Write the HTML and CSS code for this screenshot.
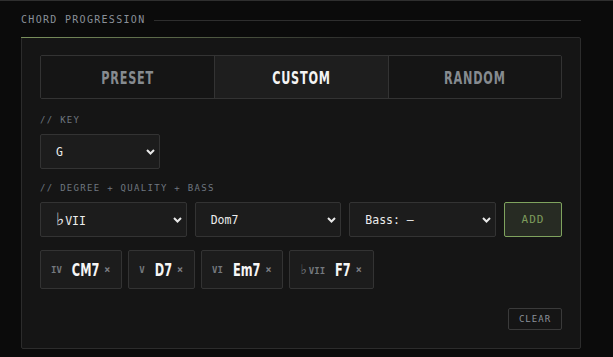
FILE: index.html
```html
<!DOCTYPE html>
<html lang="en">
<head>
<meta charset="utf-8">
<title>Chord Progression</title>
<link rel="stylesheet" href="styles.css">
</head>
<body>
<div class="wrap">
  <div class="heading">
    <span class="heading-text">CHORD PROGRESSION</span>
    <span class="heading-line"></span>
  </div>
  <section class="panel">
    <div class="tabs">
      <div class="tab"><span class="tab-text">PRESET</span></div>
      <div class="tab active"><span class="tab-text">CUSTOM</span></div>
      <div class="tab"><span class="tab-text">RANDOM</span></div>
    </div>

    <div class="label first">// KEY</div>
    <div class="select key">
      <span class="select-value">G</span>
      <svg class="chev" width="9" height="6" viewBox="0 0 9 6"><path d="M1 1 L4.5 4.5 L8 1" fill="none" stroke="#e8e8e8" stroke-width="2"/></svg>
    </div>

    <div class="label second">// DEGREE + QUALITY + BASS</div>
    <div class="builder">
      <div class="select">
        <span class="select-value"><span class="flat">♭</span>VII</span>
        <svg class="chev" width="9" height="6" viewBox="0 0 9 6"><path d="M1 1 L4.5 4.5 L8 1" fill="none" stroke="#e8e8e8" stroke-width="2"/></svg>
      </div>
      <div class="select">
        <span class="select-value">Dom7</span>
        <svg class="chev" width="9" height="6" viewBox="0 0 9 6"><path d="M1 1 L4.5 4.5 L8 1" fill="none" stroke="#e8e8e8" stroke-width="2"/></svg>
      </div>
      <div class="select">
        <span class="select-value">Bass: —</span>
        <svg class="chev" width="9" height="6" viewBox="0 0 9 6"><path d="M1 1 L4.5 4.5 L8 1" fill="none" stroke="#e8e8e8" stroke-width="2"/></svg>
      </div>
      <button class="add">ADD</button>
    </div>

    <div class="chips">
      <div class="chip"><span class="deg">IV</span><span class="name">CM7</span><span class="x">×</span></div>
      <div class="chip"><span class="deg">V</span><span class="name">D7</span><span class="x">×</span></div>
      <div class="chip"><span class="deg">VI</span><span class="name">Em7</span><span class="x">×</span></div>
      <div class="chip"><span class="deg"><span class="flat">♭</span>VII</span><span class="name">F7</span><span class="x">×</span></div>
    </div>

    <div class="actions">
      <button class="clear">CLEAR</button>
    </div>
  </section>
</div>
</body>
</html>
```

FILE: styles.css
```css
* { box-sizing: border-box; }

html, body {
  margin: 0;
  padding: 0;
}

body {
  background: #0b0b0b;
  border-top: 1px solid #2f2f2f;
  height: 357px;
  overflow: hidden;
  font-family: "DejaVu Sans Mono", "Liberation Mono", monospace;
}

.wrap {
  margin: 0 32px 0 21px;
}

.heading {
  display: flex;
  align-items: center;
  gap: 9px;
  margin-top: 13px;
  height: 12px;
  margin-bottom: 11px;
}

.heading-text {
  font-size: 10px;
  line-height: 12px;
  letter-spacing: 1.3px;
  color: #8a9099;
  white-space: nowrap;
}

.heading-line {
  flex: 1;
  height: 1px;
  background: #2e2e2e;
}

.panel {
  position: relative;
  background: #151515;
  border: 1px solid #2c2c2c;
  border-radius: 2px;
  padding: 17px 18px 18px;
}

.panel::before {
  content: "";
  position: absolute;
  top: -1px;
  left: -1px;
  right: -1px;
  height: 1px;
  background: linear-gradient(90deg, rgba(150, 180, 110, 0.75), rgba(150, 180, 110, 0) 60%);
}

.tabs {
  display: grid;
  grid-template-columns: 1fr 1fr 1fr;
  height: 44px;
  border: 1px solid #333;
  border-radius: 2px;
  overflow: hidden;
}

.tab {
  display: flex;
  align-items: center;
  justify-content: center;
  background: #151515;
  color: #868b90;
}

.tab-text {
  display: inline-block;
  font-family: "DejaVu Sans Condensed", "DejaVu Sans", sans-serif;
  font-stretch: condensed;
  font-weight: 700;
  font-size: 12.5px;
  letter-spacing: 0.8px;
  transform: scaleY(1.42);
}

.tab + .tab {
  border-left: 1px solid #333;
}

.tab.active {
  background: #1e1e1e;
  color: #f4f4f4;
}

.label {
  font-size: 9px;
  line-height: 14px;
  letter-spacing: 1.3px;
  color: #6f7780;
  margin-bottom: 7px;
}

.label.first { margin-top: 14px; }
.label.second { margin-top: 12px; }

.select {
  display: flex;
  align-items: center;
  justify-content: space-between;
  height: 35px;
  background: #1c1c1c;
  border: 1px solid #333;
  border-radius: 2px;
  padding: 0 4px 0 15px;
  color: #ececec;
  font-size: 11.5px;
}

.select.key {
  width: 120px;
}

.flat {
  font-family: "DejaVu Sans", sans-serif;
  font-size: 1.5em;
  line-height: 1;
  margin-right: 1px;
}

.chev {
  display: block;
  flex: none;
}

.builder {
  display: grid;
  grid-template-columns: 1fr 1fr 1fr 58px;
  gap: 8px;
}

.add {
  height: 35px;
  margin: 0;
  padding: 0;
  background: #272b23;
  border: 1px solid #7fa35e;
  border-radius: 2px;
  color: #7d9c5c;
  font-family: "DejaVu Sans Mono", monospace;
  font-size: 11px;
  letter-spacing: 1.1px;
}

.chips {
  display: flex;
  gap: 6px;
  margin-top: 13px;
}

.chip {
  display: flex;
  align-items: center;
  height: 39px;
  padding: 0 11px 0 10px;
  background: #1c1c1c;
  border: 1px solid #333;
  border-radius: 2px;
}

.deg {
  font-size: 9px;
  font-weight: 700;
  color: #74787d;
  margin-right: 10px;
}

.deg .flat {
  margin-right: 2px;
}

.name {
  display: inline-block;
  font-family: "DejaVu Sans Condensed", "DejaVu Sans", sans-serif;
  font-stretch: condensed;
  font-weight: 700;
  font-size: 12.6px;
  transform: scaleY(1.4);
  color: #f6f6f6;
  margin-right: 5px;
}

.x {
  font-size: 10px;
  font-weight: 700;
  color: #7c7f84;
}

.actions {
  display: flex;
  justify-content: flex-end;
  margin-top: 19px;
}

.clear {
  width: 54px;
  height: 22px;
  margin: 0;
  padding: 0;
  background: transparent;
  border: 1px solid #3a3a3a;
  border-radius: 2px;
  color: #8a9099;
  font-family: "DejaVu Sans Mono", monospace;
  font-size: 9px;
  letter-spacing: 1px;
}
```
